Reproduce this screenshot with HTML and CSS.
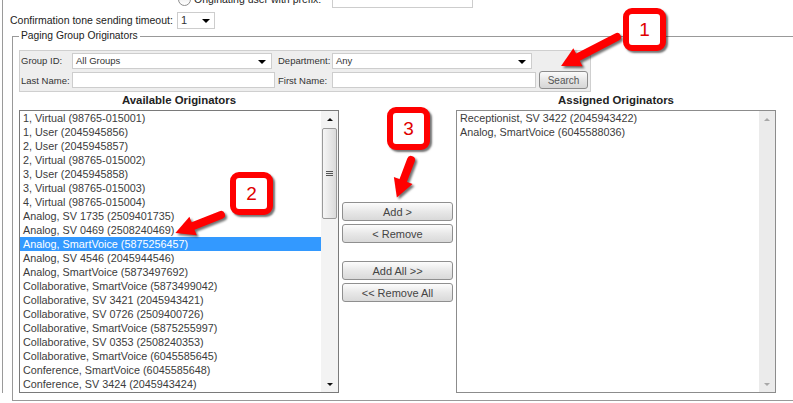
FILE: index.html
```html
<!DOCTYPE html>
<html lang="en">
<head>
    <meta charset="UTF-8">
    <meta name="viewport" content="width=device-width, initial-scale=1.0">
    <title>Paging Group Originators</title>
    <link rel="stylesheet" href="styles.css">
</head>
<body>
    <div class="page">
        <div class="prefix-row">
            <span class="radio"></span>
            <span class="prefix-label">Originating user with prefix:</span>
            <span class="text-input prefix-input"></span>
        </div>

        <div class="timeout-row">
            <span class="timeout-label">Confirmation tone sending timeout:</span>
            <div class="select timeout-select">1<span class="caret"></span></div>
        </div>

        <fieldset class="originators">
            <legend>Paging Group Originators</legend>

            <div class="filter">
                <div class="filter-row">
                    <span class="lbl">Group ID:</span>
                    <div class="select wide-select">All Groups<span class="caret"></span></div>
                    <span class="lbl lbl-right">Department:</span>
                    <div class="select wide-select">Any<span class="caret"></span></div>
                </div>
                <div class="filter-row second">
                    <span class="lbl">Last Name:</span>
                    <span class="text-input name-input"></span>
                    <span class="lbl lbl-right first">First Name:</span>
                    <span class="text-input name-input wider"></span>
                    <button class="search-btn">Search</button>
                </div>
            </div>

            <div class="lists">
                <div class="col">
                    <div class="col-title">Available Originators</div>
                    <div class="listbox dark">
                        <div class="items">
                            <div class="item">1, Virtual (98765-015001)</div>
                            <div class="item">1, User (2045945856)</div>
                            <div class="item">2, User (2045945857)</div>
                            <div class="item">2, Virtual (98765-015002)</div>
                            <div class="item">3, User (2045945858)</div>
                            <div class="item">3, Virtual (98765-015003)</div>
                            <div class="item">4, Virtual (98765-015004)</div>
                            <div class="item">Analog, SV 1735 (2509401735)</div>
                            <div class="item">Analog, SV 0469 (2508240469)</div>
                            <div class="item selected">Analog, SmartVoice (5875256457)</div>
                            <div class="item">Analog, SV 4546 (2045944546)</div>
                            <div class="item">Analog, SmartVoice (5873497692)</div>
                            <div class="item">Collaborative, SmartVoice (5873499042)</div>
                            <div class="item">Collaborative, SV 3421 (2045943421)</div>
                            <div class="item">Collaborative, SV 0726 (2509400726)</div>
                            <div class="item">Collaborative, SmartVoice (5875255997)</div>
                            <div class="item">Collaborative, SV 0353 (2508240353)</div>
                            <div class="item">Collaborative, SmartVoice (6045585645)</div>
                            <div class="item">Conference, SmartVoice (6045585648)</div>
                            <div class="item">Conference, SV 3424 (2045943424)</div>
                        </div>
                        <div class="scrollbar">
                            <div class="sb-btn"><span class="arrow-up"></span></div>
                            <div class="thumb"><span class="grip"></span></div>
                            <div class="track"></div>
                            <div class="sb-btn"><span class="arrow-down"></span></div>
                        </div>
                    </div>
                </div>

                <div class="movers">
                    <button class="mover-btn">Add &gt;</button>
                    <button class="mover-btn">&lt; Remove</button>
                    <button class="mover-btn group-start">Add All &gt;&gt;</button>
                    <button class="mover-btn">&lt;&lt; Remove All</button>
                </div>

                <div class="col">
                    <div class="col-title">Assigned Originators</div>
                    <div class="listbox">
                        <div class="items assigned">
                            <div class="item">Receptionist, SV 3422 (2045943422)</div>
                            <div class="item">Analog, SmartVoice (6045588036)</div>
                        </div>
                        <div class="scrollbar disabled">
                            <div class="sb-btn"><span class="arrow-up"></span></div>
                            <div class="track"></div>
                            <div class="sb-btn"><span class="arrow-down"></span></div>
                        </div>
                    </div>
                </div>
            </div>
        </fieldset>
    </div>

    <!-- annotation layer -->
    <svg class="arrows" width="793" height="403" viewBox="0 0 793 403">
        <g transform="translate(617 37) rotate(152.6)">
            <line x1="0" y1="0" x2="46" y2="0" stroke="#f00" stroke-width="8" stroke-linecap="round"/>
            <polygon points="44,-10 63,0 44,10" fill="#f00"/>
        </g>
        <g transform="translate(221 215) rotate(158.6)">
            <line x1="0" y1="0" x2="32" y2="0" stroke="#f00" stroke-width="8" stroke-linecap="round"/>
            <polygon points="30,-10 49,0 30,10" fill="#f00"/>
        </g>
        <g transform="translate(411 160) rotate(110.7)">
            <line x1="0" y1="0" x2="24" y2="0" stroke="#f00" stroke-width="8" stroke-linecap="round"/>
            <polygon points="22,-10 40,0 22,10" fill="#f00"/>
        </g>
    </svg>
    <div class="callout c1">1</div>
    <div class="callout c2">2</div>
    <div class="callout c3">3</div>
</body>
</html>
```

FILE: styles.css
```css
html, body {
    margin: 0;
    overflow: hidden;
}

body {
    font-family: 'Liberation Sans', Arial, sans-serif;
    font-size: 11px;
    color: #333;
    background-color: #fff;
    width: 793px;
    height: 403px;
}

.page {
    margin-left: 2px;
    border-left: 1px solid #9a9a9a;
    height: 403px;
}

/* top rows */
.prefix-row {
    display: flex;
    align-items: center;
    height: 18px;
    margin-top: -10px;
    padding-left: 175px;
}

.radio {
    width: 11px;
    height: 11px;
    border: 1px solid #8e8e8e;
    border-radius: 50%;
    background: linear-gradient(#e6e6e6, #fff);
    margin-right: 3px;
}

.prefix-label {
    width: 138px;
    font-size: 10.5px;
    white-space: nowrap;
    color: #222;
}

.text-input {
    display: block;
    box-sizing: border-box;
    height: 16px;
    border: 1px solid #cdcdcd;
    background-color: #fff;
}

.prefix-input {
    width: 141px;
    height: 18px;
}

.timeout-row {
    display: flex;
    align-items: center;
    height: 18px;
    margin-top: 3px;
    padding-left: 7px;
}

.timeout-label {
    width: 167px;
    font-size: 10.5px;
    white-space: nowrap;
    color: #222;
}

.select {
    box-sizing: border-box;
    height: 16px;
    border: 1px solid #cdcdcd;
    background-color: #fff;
    display: flex;
    align-items: center;
    justify-content: space-between;
    padding: 0 5px 0 3px;
    color: #333;
    white-space: nowrap;
}

.timeout-select {
    width: 38px;
    height: 17px;
    padding-right: 4px;
}

.caret {
    width: 0;
    height: 0;
    border-left: 4px solid transparent;
    border-right: 4px solid transparent;
    border-top: 4px solid #000;
    margin-top: 2px;
}

/* fieldset */
.originators {
    margin: 0 0 0 9px;
    padding: 0 6px 7px 6px;
    border: 1px solid #999;
    width: 800px;
    min-width: 0;
}

.originators legend {
    padding: 0 2px;
    font-size: 10.3px;
    line-height: 14px;
    color: #222;
}

.filter {
    box-sizing: border-box;
    width: 572px;
    height: 42px;
    margin-top: 7px;
    padding: 1px;
    border: 1px solid #cfcfcf;
    background-color: #eeeeee;
    font-size: 9.5px;
}

.filter-row {
    display: flex;
    align-items: center;
    height: 17px;
}

.filter-row.second {
    height: 18px;
    margin-top: 2px;
}

.lbl {
    width: 51px;
    white-space: nowrap;
    color: #333;
}

.lbl-right {
    width: 54px;
    margin-left: 6px;
}

.lbl-right.first {
    margin-left: 3px;
}

.wide-select {
    width: 200px;
}

.name-input {
    width: 203px;
}

.name-input.wider {
    width: 204px;
}

.search-btn {
    box-sizing: border-box;
    width: 49px;
    height: 18px;
    margin-left: 3px;
    padding: 0;
    border: 1px solid #8c8c8c;
    border-radius: 3px;
    background: linear-gradient(#fbfbfb, #e4e4e4 55%, #d6d6d6);
    font-family: inherit;
    font-size: 10px;
    color: #555;
}

/* lists */
.lists {
    display: flex;
    align-items: flex-start;
}

.col {
    width: 320px;
}

.col-title {
    text-align: center;
    font-weight: bold;
    font-size: 11.4px;
    line-height: 16px;
    margin-bottom: 2px;
    color: #222;
}

.listbox {
    box-sizing: border-box;
    height: 283px;
    border: 1px solid #8c8c8c;
    display: flex;
    background-color: #fff;
}

.listbox.dark {
    border-color: #7a7a7a;
}

.items {
    flex: 1;
    overflow: hidden;
}

.item {
    height: 14px;
    line-height: 14px;
    padding-left: 3px;
    font-size: 10.8px;
    white-space: nowrap;
    color: #3c3c3c;
}

.item.selected {
    background-color: #3399ff;
    color: #fff;
}

.scrollbar {
    width: 17px;
    display: flex;
    flex-direction: column;
    background-color: #f3f3f3;
}

.scrollbar.disabled {
    width: 16px;
    background-color: #ebebeb;
}

.sb-btn {
    height: 16px;
    display: flex;
    align-items: center;
    justify-content: center;
}

.arrow-up {
    border-left: 3px solid transparent;
    border-right: 3px solid transparent;
    border-bottom: 3px solid #111;
}

.arrow-down {
    border-left: 3px solid transparent;
    border-right: 3px solid transparent;
    border-top: 3px solid #111;
}

.disabled .arrow-up {
    border-bottom-color: #a8a8a8;
}

.disabled .arrow-down {
    border-top-color: #a8a8a8;
}

.thumb {
    height: 89px;
    margin: 1px 1px 0;
    border: 1px solid #9a9a9a;
    border-radius: 2px;
    background: linear-gradient(to right, #f6f6f6, #dadada);
    display: flex;
    align-items: center;
    justify-content: center;
}

.grip {
    width: 7px;
    height: 5px;
    background: linear-gradient(#555 1px, transparent 1px) 0 0 / 7px 2px repeat-y;
}

.track {
    flex: 1;
}

.movers {
    width: 111px;
    margin: 0 3px;
    padding-top: 110px;
    display: flex;
    flex-direction: column;
    gap: 3px;
}

.mover-btn {
    height: 19px;
    padding: 0;
    border: 1px solid #8f8f8f;
    border-radius: 3px;
    background: linear-gradient(#fcfcfc, #e8e8e8 50%, #d9d9d9);
    font-family: inherit;
    font-size: 11px;
    color: #444;
}

.mover-btn.group-start {
    margin-top: 15px;
}

/* annotations */
.arrows {
    position: absolute;
    left: 0;
    top: 0;
    pointer-events: none;
    filter: drop-shadow(2px 2px 1px rgba(0, 0, 0, 0.55));
}

.callout {
    position: absolute;
    width: 31px;
    height: 31px;
    border: 6px solid #f00;
    border-radius: 9px;
    background-color: #fff;
    color: #e00000;
    font-size: 19px;
    display: flex;
    align-items: center;
    justify-content: center;
    box-shadow: 2px 2px 2px rgba(0, 0, 0, 0.55);
}

.c1 {
    left: 623px;
    top: 8px;
}

.c2 {
    left: 230px;
    top: 172px;
}

.c3 {
    left: 387px;
    top: 107px;
}
```
